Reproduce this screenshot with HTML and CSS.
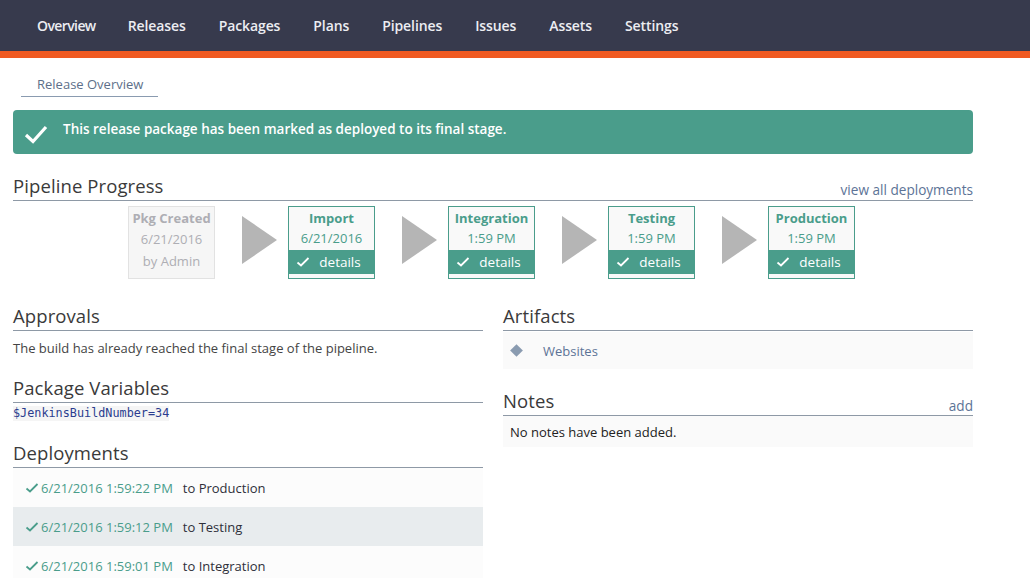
FILE: index.html
```html
<!DOCTYPE html>
<html>
<head>
<meta charset="utf-8">
<link rel="stylesheet" href="styles.css">
</head>
<body>
<header class="topnav">
  <nav class="navlinks">
    <a>Overview</a><a>Releases</a><a>Packages</a><a>Plans</a><a>Pipelines</a><a>Issues</a><a>Assets</a><a>Settings</a>
  </nav>
</header>
<div class="accent"></div>
<main class="page">
  <div class="tabs"><span class="tab">Release Overview</span></div>
  <div class="alert">
    <svg class="alert-icon" width="24" height="20" viewBox="0 0 24 20"><path d="M2 11 L9 17.5 L22 3" fill="none" stroke="#fff" stroke-width="3.2" stroke-linejoin="miter"/></svg>
    <span>This release package has been marked as deployed to its final stage.</span>
  </div>

  <section class="block progress">
    <div class="heading"><h2>Pipeline Progress</h2><a class="hlink">view all deployments</a></div>
    <div class="pipeline">
      <div class="stage pending">
        <div class="st-title">Pkg Created</div>
        <div class="st-line">6/21/2016</div>
        <div class="st-line">by Admin</div>
      </div>
      <div class="arrow"></div>
      <div class="stage">
        <div class="st-title">Import</div>
        <div class="st-line">6/21/2016</div>
        <div class="st-details"><svg width="14" height="12" viewBox="0 0 14 12"><path d="M1.5 6.5 L5 9.5 L12.5 2" fill="none" stroke="#fff" stroke-width="1.8"/></svg>details</div>
      </div>
      <div class="arrow"></div>
      <div class="stage">
        <div class="st-title">Integration</div>
        <div class="st-line">1:59 PM</div>
        <div class="st-details"><svg width="14" height="12" viewBox="0 0 14 12"><path d="M1.5 6.5 L5 9.5 L12.5 2" fill="none" stroke="#fff" stroke-width="1.8"/></svg>details</div>
      </div>
      <div class="arrow"></div>
      <div class="stage">
        <div class="st-title">Testing</div>
        <div class="st-line">1:59 PM</div>
        <div class="st-details"><svg width="14" height="12" viewBox="0 0 14 12"><path d="M1.5 6.5 L5 9.5 L12.5 2" fill="none" stroke="#fff" stroke-width="1.8"/></svg>details</div>
      </div>
      <div class="arrow"></div>
      <div class="stage">
        <div class="st-title">Production</div>
        <div class="st-line">1:59 PM</div>
        <div class="st-details"><svg width="14" height="12" viewBox="0 0 14 12"><path d="M1.5 6.5 L5 9.5 L12.5 2" fill="none" stroke="#fff" stroke-width="1.8"/></svg>details</div>
      </div>
    </div>
  </section>

  <div class="columns">
    <div class="col">
      <section class="block">
        <div class="heading"><h2>Approvals</h2></div>
        <p class="plain">The build has already reached the final stage of the pipeline.</p>
      </section>
      <section class="block">
        <div class="heading"><h2>Package Variables</h2></div>
        <code class="var">$JenkinsBuildNumber=34</code>
      </section>
      <section class="block deployments">
        <div class="heading"><h2>Deployments</h2></div>
        <ul class="deploys">
          <li><span class="ok"><svg width="14" height="12" viewBox="0 0 14 12"><path d="M1.5 6.5 L5 9.5 L12.5 2" fill="none" stroke="#4a9d8b" stroke-width="1.8"/></svg>6/21/2016 1:59:22 PM</span><span class="to">to Production</span></li>
          <li class="alt"><span class="ok"><svg width="14" height="12" viewBox="0 0 14 12"><path d="M1.5 6.5 L5 9.5 L12.5 2" fill="none" stroke="#4a9d8b" stroke-width="1.8"/></svg>6/21/2016 1:59:12 PM</span><span class="to">to Testing</span></li>
          <li><span class="ok"><svg width="14" height="12" viewBox="0 0 14 12"><path d="M1.5 6.5 L5 9.5 L12.5 2" fill="none" stroke="#4a9d8b" stroke-width="1.8"/></svg>6/21/2016 1:59:01 PM</span><span class="to">to Integration</span></li>
        </ul>
      </section>
    </div>
    <div class="col">
      <section class="block">
        <div class="heading"><h2>Artifacts</h2></div>
        <div class="artifact"><span class="diamond"></span><a>Websites</a></div>
      </section>
      <section class="block notes">
        <div class="heading"><h2>Notes</h2><a class="hlink">add</a></div>
        <div class="note">No notes have been added.</div>
      </section>
    </div>
  </div>
</main>
</body>
</html>
```

FILE: styles.css
```css
* { box-sizing: border-box; }
html, body { margin: 0; padding: 0; background: #fff; }
body { font-family: "Open Sans", "Liberation Sans", sans-serif; color: #333; font-size: 13px; overflow: hidden; }
a { cursor: pointer; }

.topnav { background: #373a4d; height: 51px; display: flex; align-items: center; }
.navlinks { display: flex; padding-left: 37px; }
.navlinks a { color: #ecedf2; font-size: 14px; font-weight: 600; margin-right: 33px; letter-spacing: -0.1px; }
.navlinks a:first-child { letter-spacing: -0.6px; margin-right: 32px; }
.accent { height: 7px; background: #f05a22; }

.page { padding: 0 57px 0 13px; }
.tabs { padding: 17px 0 0 8px; }
.tab { display: inline-block; color: #5d6f89; font-size: 13px; padding: 0 15px 3px 16px; border-bottom: 1px solid #8a9bb0; line-height: 17px; }

.alert { margin-top: 13px; height: 44px; background: #4a9d8b; border-radius: 4px; display: flex; align-items: center; color: #fff; font-size: 13.5px; font-weight: 600; padding-left: 11px; padding-bottom: 7px; }
.alert-icon { margin-right: 15px; margin-top: 10px; }

.block { margin-top: 19px; }
.block.progress { margin-top: 20px; }
.heading { display: flex; justify-content: space-between; align-items: flex-end; border-bottom: 1px solid #8e99a6; padding-bottom: 2px; }
.heading h2 { margin: 0; font-weight: 400; font-size: 18.5px; line-height: 24px; color: #3a3a3a; letter-spacing: 0.1px; }
.hlink { color: #5c7396; font-size: 13.6px; line-height: 16px; }

.pipeline { display: flex; align-items: flex-start; padding-left: 115px; margin-top: 5px; }
.stage { width: 87px; height: 73px; border: 1px solid #4a9d8b; background: #f9f9f9; text-align: center; color: #4a9d8b; display: flex; flex-direction: column; }
.st-title { font-weight: 700; font-size: 13px; line-height: 20px; margin-top: 1px; }
.st-line { font-size: 13px; line-height: 20px; }
.st-details { background: #4a9d8b; color: #fff; font-size: 13.5px; height: 24px; margin-top: 2px; display: flex; align-items: center; justify-content: center; gap: 9px; padding-right: 6px; }
.stage.pending { border-color: #e2e2e2; background: #f6f6f6; color: #aeaeb4; }
.stage.pending .st-line { line-height: 22px; }
.arrow { flex: none; width: 0; height: 0; border-top: 24.5px solid transparent; border-bottom: 24.5px solid transparent; border-left: 35px solid #b5b5b5; margin: 10px 11px 0 27px; }

.columns { display: grid; grid-template-columns: 470px 470px; column-gap: 20px; margin-top: 5px; }
.col .block:first-child { margin-top: 20px; }
.col .block + .block { margin-top: 18px; }
.col .block.deployments { margin-top: 20px; }
.plain { margin: 7px 0 0; font-size: 13px; color: #444; line-height: 20px; }
.var { display: inline-block; margin-top: 0; font-family: "DejaVu Sans Mono", monospace; font-size: 11.8px; color: #2b3d8f; background: #f5f5f5; line-height: 15px; }

.deploys { list-style: none; margin: 0; padding: 0; }
.deploys li { height: 39px; display: flex; align-items: center; background: #fcfcfc; padding-left: 12px; font-size: 13px; }
.deploys li.alt { background: #e8ecee; }
.ok { color: #4a9d8b; display: inline-flex; align-items: center; gap: 2px; margin-right: 10px; }
.to { color: #2f2f3a; }

.artifact { background: #fafafa; height: 37px; display: flex; align-items: center; padding-left: 8px; margin-top: 1px; }
.diamond { width: 9px; height: 9px; background: #8a9bb0; transform: rotate(45deg); margin: 0 22px 0 1px; }
.artifact a { color: #5c7396; font-size: 13px; }

.col .block.notes { margin-top: 20px; }
.notes .hlink { margin-bottom: -1px; }
.note { background: #fafafa; height: 31px; display: flex; align-items: center; padding-left: 7px; font-size: 13px; color: #222; }
```
